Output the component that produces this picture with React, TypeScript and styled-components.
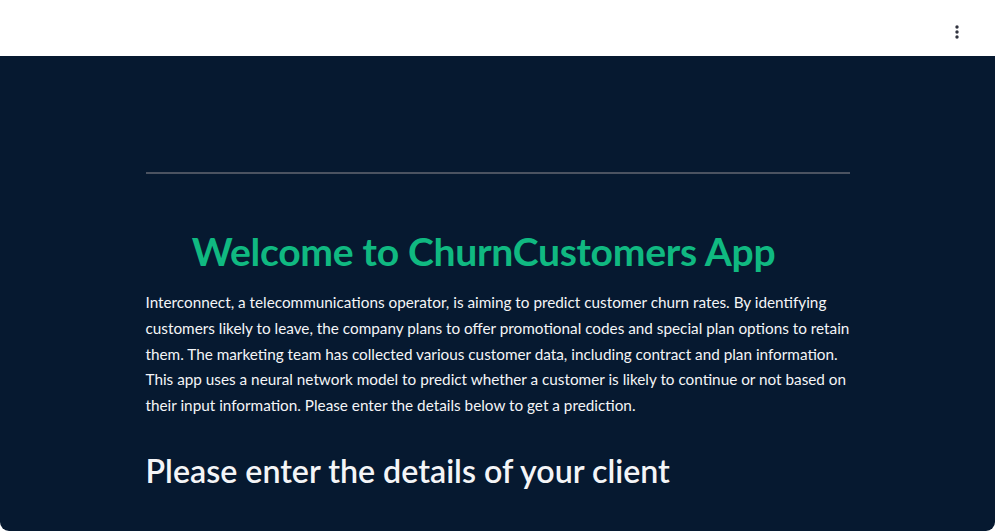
import React from "react";
import styled, { createGlobalStyle } from "styled-components";

const Global = createGlobalStyle`
  html, body { margin: 0; padding: 0; background: #ffffff; }
  body { font-family: "Lato", "Noto Sans", sans-serif; }
  * { box-sizing: border-box; }
`;

const Page = styled.div`
  width: 995px;
  height: 531px;
  display: flex;
  flex-direction: column;
  background: #ffffff;
  overflow: hidden;
`;

const Header = styled.header`
  height: 56px;
  flex: none;
  display: flex;
  align-items: center;
  justify-content: flex-end;
  padding: 7px 26px 0 0;
  background: #ffffff;
`;

const MenuButton = styled.button`
  width: 24px;
  height: 24px;
  border: none;
  background: transparent;
  padding: 0;
  display: flex;
  align-items: center;
  justify-content: center;
  color: #31333f;
`;

const Main = styled.main`
  flex: 1;
  background: #061930;
  border-radius: 0 0 9px 9px;
  display: flex;
  justify-content: center;
  padding-top: 116px;
`;

const Content = styled.div`
  width: 704px;
  display: flex;
  flex-direction: column;
`;

const Divider = styled.hr`
  margin: 0;
  border: none;
  height: 2px;
  background: #4b5361;
`;

const Title = styled.h1`
  margin: 52px 0 0;
  padding-right: 28px;
  text-align: center;
  color: #10b981;
  font-size: 39.1px;
  font-weight: 700;
  line-height: 50px;
  letter-spacing: -0.3px;
`;

const Intro = styled.p`
  margin: 14px 0 0;
  color: #f4f5f7;
  font-size: 15.3px;
  line-height: 25.75px;
  white-space: nowrap;
`;

const SubHeading = styled.h2`
  margin: 30px 0 0;
  color: #f4f5f7;
  font-size: 32.2px;
  font-weight: 600;
  line-height: 44px;
`;

function KebabIcon() {
  return (
    <svg width="4" height="14" viewBox="0 0 4 14" fill="currentColor">
      <circle cx="2" cy="2" r="1.7" />
      <circle cx="2" cy="7" r="1.7" />
      <circle cx="2" cy="12" r="1.7" />
    </svg>
  );
}

const introLines = [
  "Interconnect, a telecommunications operator, is aiming to predict customer churn rates. By identifying",
  "customers likely to leave, the company plans to offer promotional codes and special plan options to retain",
  "them. The marketing team has collected various customer data, including contract and plan information.",
  "This app uses a neural network model to predict whether a customer is likely to continue or not based on",
  "their input information. Please enter the details below to get a prediction.",
];

export default function App() {
  return (
    <>
      <Global />
      <Page>
        <Header>
          <MenuButton aria-label="Main menu">
            <KebabIcon />
          </MenuButton>
        </Header>
        <Main>
          <Content>
            <Divider />
            <Title>Welcome to ChurnCustomers App</Title>
            <Intro>
              {introLines.map((line, i) => (
                <React.Fragment key={i}>
                  {line}
                  {i < introLines.length - 1 && <br />}
                </React.Fragment>
              ))}
            </Intro>
            <SubHeading>Please enter the details of your client</SubHeading>
          </Content>
        </Main>
      </Page>
    </>
  );
}
